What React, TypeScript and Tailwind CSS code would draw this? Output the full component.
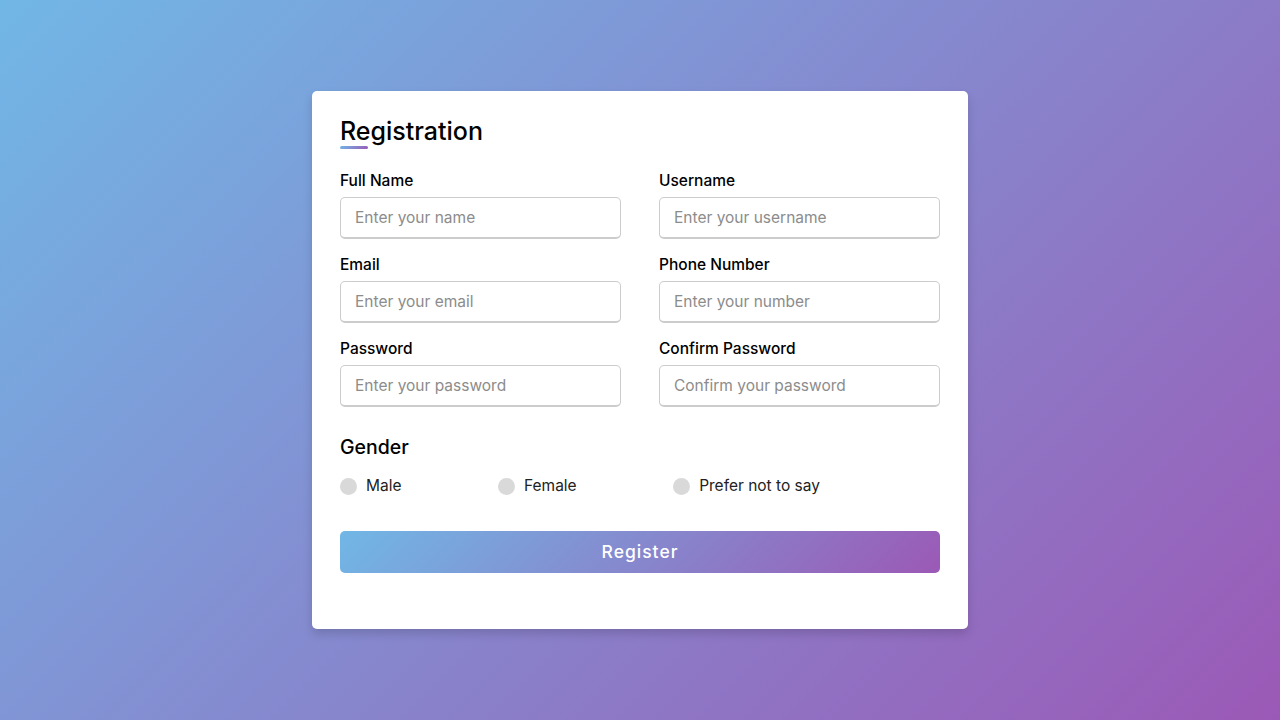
import React from "react";

const fields = [
  { label: "Full Name", placeholder: "Enter your name" },
  { label: "Username", placeholder: "Enter your username" },
  { label: "Email", placeholder: "Enter your email" },
  { label: "Phone Number", placeholder: "Enter your number" },
  { label: "Password", placeholder: "Enter your password" },
  { label: "Confirm Password", placeholder: "Confirm your password" },
];

const genders = ["Male", "Female", "Prefer not to say"];

export default function App() {
  return (
    <div
      className="min-h-screen w-full flex items-center justify-center bg-[linear-gradient(135deg,#71b7e6,#9b59b6)]"
      style={{ fontFamily: "Inter, 'Noto Sans', sans-serif" }}
    >
      <div className="w-[656px] bg-white rounded-[5px] shadow-[0_5px_10px_rgba(0,0,0,0.15)] px-[28px] pt-[23px] pb-[56px]">
        {/* Title */}
        <div className="relative text-[25px] font-medium leading-[35px] text-black">
          Registration
          <span className="absolute left-0 bottom-0 h-[3px] w-[28px] rounded-[5px] bg-[linear-gradient(135deg,#71b7e6,#9b59b6)]" />
        </div>

        {/* Inputs */}
        <div className="mt-[21px] grid grid-cols-2 gap-x-[38px] gap-y-[15px]">
          {fields.map((f) => (
            <div key={f.label} className="flex flex-col">
              <label className="text-[15.5px] font-medium leading-[22px] text-black mb-[5px]">
                {f.label}
              </label>
              <input
                type="text"
                placeholder={f.placeholder}
                className="h-[42px] w-full rounded-[5px] border border-[#ccc] border-b-2 pl-[14px] text-[15.5px] outline-none placeholder:text-[#8c8c8c]"
              />
            </div>
          ))}
        </div>

        {/* Gender */}
        <div className="mt-[26px] text-[19.5px] font-medium leading-[28px] text-black">Gender</div>
        <div className="mt-[13px] flex w-[480px] justify-between h-[24px] items-center">
          {genders.map((g) => (
            <label key={g} className="flex items-center">
              <span className="h-[17px] w-[17px] rounded-full bg-[#d9d9d9] mr-[9px]" />
              <span className="text-[15.5px] leading-[24px] text-[#222]">{g}</span>
            </label>
          ))}
        </div>

        {/* Button */}
        <button className="mt-[33px] h-[42px] w-full rounded-[5px] bg-[linear-gradient(135deg,#71b7e6,#9b59b6)] text-white text-[17.5px] font-medium tracking-[1px] leading-[42px]">
          Register
        </button>
      </div>
    </div>
  );
}
